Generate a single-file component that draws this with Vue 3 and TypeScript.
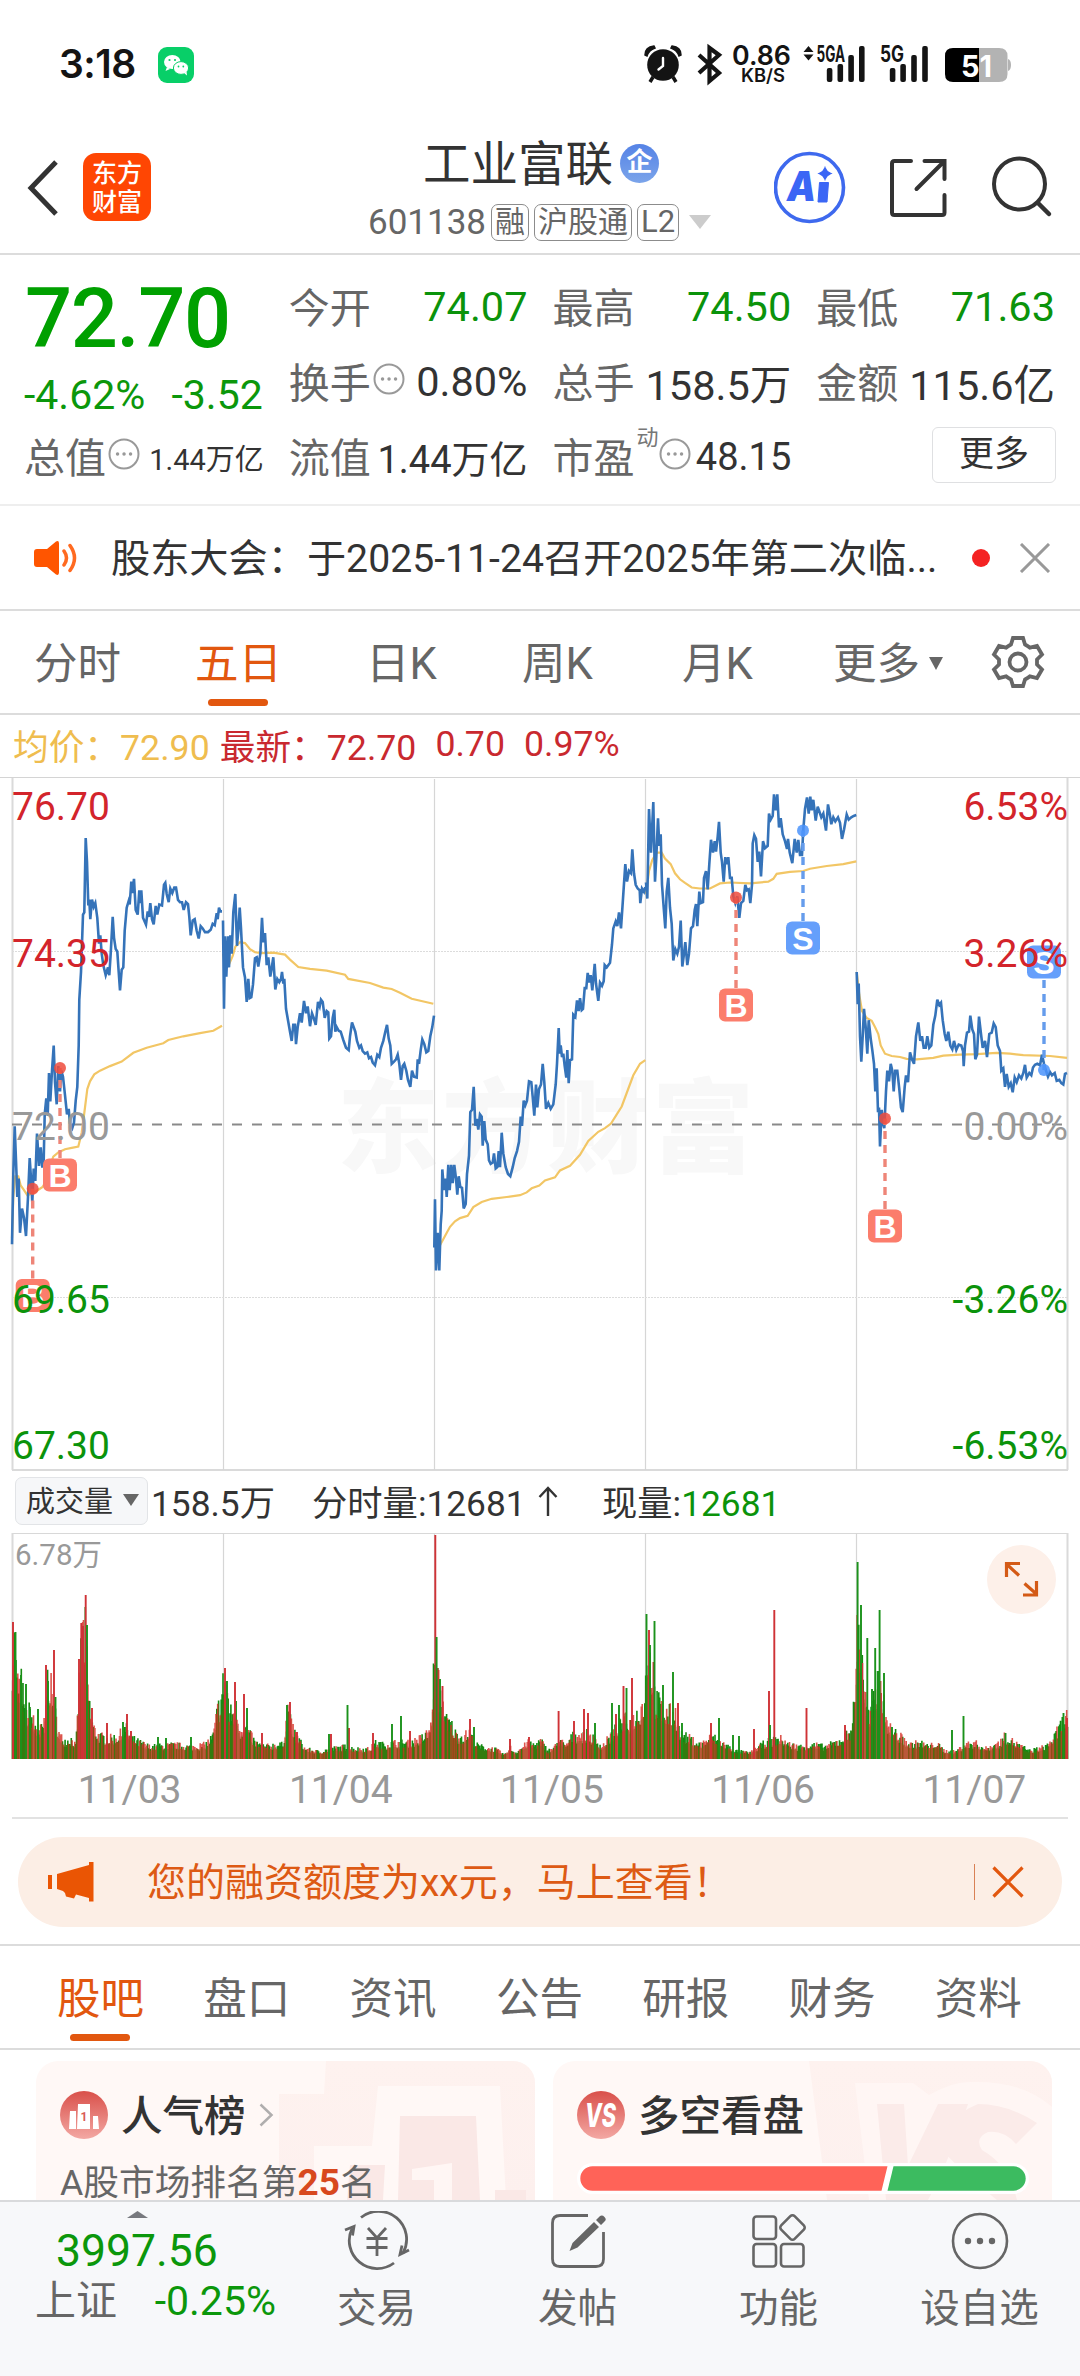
<script setup lang="ts">
type Pt = [number, number]

interface Day {
  base: number
  price: string
  avg: string
}

// Traces are recorded on a 3 x 2.178 grid relative to the top of the plot.
const days: Day[] = [
  {
    base: 0,
    price:
      '36,1033 40,880 44,776 48,850 52,930 56,890 60,1008 66,955 72,975 78,1015 84,930 89,845 93,890 97,942 101,868 106,895 111,792 117,862 122,822 127,866 131,850 134,750 139,715 143,753 147,660 151,722 156,655 161,600 165,680 170,728 175,645 180,700 184,655 189,668 195,708 201,750 206,738 210,770 217,780 222,768 227,720 232,690 236,600 238,500 243,440 249,315 253,310 257,148 261,200 265,295 268,282 271,325 276,282 281,298 286,290 292,322 297,378 301,360 305,400 310,425 317,447 324,430 328,447 332,400 338,320 342,365 347,390 352,395 356,440 360,480 365,435 370,430 374,350 380,300 386,285 389,293 394,243 397,268 402,237 407,305 413,315 418,262 421,290 424,262 429,322 438,337 443,308 447,320 451,290 456,325 461,336 467,296 472,315 478,293 486,295 492,250 496,246 500,270 506,288 511,258 517,268 523,256 528,256 534,283 540,288 546,288 551,305 558,288 564,292 568,320 572,360 578,328 584,325 590,350 596,367 602,340 608,345 615,353 624,353 632,348 638,335 644,338 650,312 653,325 657,300 661,308 666,308',
    avg: '36,1020 40,930 46,885 55,885 62,905 72,915 82,926 98,922 115,914 128,908 140,893 150,862 160,842 175,833 195,826 215,823 235,820 245,790 255,735 262,695 270,678 283,663 300,655 330,645 365,635 400,616 440,605 490,595 505,588 550,580 600,573 640,568 666,557',
  },
  {
    base: 0,
    price:
      '669,328 672,520 675,362 679,450 684,362 687,430 691,360 695,400 700,310 706,270 711,383 715,350 719,300 723,345 729,430 735,452 740,505 745,455 749,497 754,495 759,467 765,410 770,408 775,428 781,400 786,322 790,375 795,355 800,425 805,408 811,450 815,432 820,408 826,478 832,455 838,462 843,455 846,440 850,465 853,455 858,520 864,545 870,570 875,590 880,555 885,555 888,597 893,560 900,530 905,550 912,503 918,530 923,515 930,558 936,530 941,540 947,555 954,505 959,515 963,500 968,505 974,540 980,525 985,528 988,585 993,580 998,540 1003,522 1006,570 1010,560 1016,568 1022,570 1030,588 1038,605 1046,610 1050,580 1056,550 1061,560 1066,570 1071,590 1078,605 1083,600 1088,612 1095,618 1102,615 1107,628 1113,625 1118,637 1125,643 1132,620 1138,625 1143,605 1150,590 1156,570 1161,555 1166,585 1171,600 1175,640 1182,635 1188,630 1193,620 1198,640 1203,675 1208,645 1213,640 1219,655 1224,675 1231,690 1236,655 1242,668 1250,670 1253,630 1257,640 1262,610 1267,587 1273,597 1279,615 1285,612 1291,580 1297,560 1302,535',
    avg: '669,400 678,430 686,425 698,405 706,385 720,375 735,377 750,390 765,397 785,399 820,398 855,402 870,413 895,429 930,433 980,437 1035,446 1045,455 1110,464 1150,474 1175,477 1200,485 1235,498 1300,509',
  },
  {
    base: 1260,
    price:
      '43,1040 45,935 48,1090 53,1008 58,1090 62,990 65,960 67,870 72,915 77,890 80,930 85,860 89,915 94,860 98,900 103,860 108,890 112,925 116,885 121,908 126,910 131,955 137,945 141,880 147,840 151,745 156,740 161,690 166,775 170,760 175,783 180,750 185,755 188,818 193,765 197,805 203,815 207,850 212,858 218,855 222,835 227,868 232,865 236,830 240,865 245,790 250,835 257,865 264,880 271,885 278,865 284,845 291,830 297,810 302,755 306,775 311,720 316,730 321,720 327,678 334,680 338,712 343,753 348,685 352,735 357,695 363,685 368,640 373,680 378,738 385,725 392,738 400,728 407,685 411,640 416,562 419,618 422,600 426,625 430,618 434,645 439,670 442,610 446,682 450,632 456,630 460,533 466,538 471,502 476,525 480,497 485,523 489,520 494,475 499,475 503,442 508,463 512,447 517,480 524,422 528,465 535,503 540,463 546,470 551,460 554,425 560,430 570,420 576,380 580,345 587,330 592,340 597,310 603,345 609,280 616,205 621,243 627,220 633,225 637,173 642,225 647,250 653,258 659,262 661,290 666,258 672,265 676,255',
    avg: '60,1035 75,1015 90,995 105,983 120,976 143,971 160,952 185,941 215,934 260,930 300,926 320,920 335,911 358,905 375,894 405,887 420,872 450,862 480,838 505,808 535,788 555,780 573,770 605,733 640,665 660,640 676,632',
  },
  {
    base: 1260,
    price:
      '678,245 682,280 687,85 693,180 700,70 705,243 709,190 714,105 718,165 722,140 726,250 731,300 736,345 740,265 745,235 750,300 755,335 760,415 766,390 772,400 777,385 782,328 787,428 791,405 796,375 802,425 807,400 813,345 819,340 824,305 828,292 832,340 838,265 842,290 849,288 852,235 858,220 863,260 868,205 873,152 879,180 884,155 888,178 893,145 897,113 902,180 906,200 911,243 916,190 920,205 925,190 930,235 935,235 940,275 946,290 952,275 958,322 963,290 970,285 976,250 981,262 986,260 991,290 996,250 998,160 1003,142 1008,150 1013,200 1018,178 1023,232 1029,155 1035,170 1043,165 1047,95 1052,108 1058,100 1062,53 1067,88 1072,53 1077,125 1082,105 1088,140 1095,155 1101,172 1104,150 1109,180 1117,203 1124,150 1130,180 1135,152 1140,185 1146,185 1150,130 1155,85 1161,60 1166,95 1171,58 1175,88 1180,65 1187,110 1193,80 1198,90 1204,103 1210,95 1218,132 1224,75 1229,95 1234,118 1240,103 1246,112 1254,103 1260,115 1266,150 1272,130 1280,97 1286,108 1294,103 1301,100 1309,98',
    avg: '678,270 687,220 697,196 710,180 725,180 735,193 752,205 765,225 780,238 795,246 815,256 840,258 870,258 900,247 930,245 990,247 1045,243 1060,237 1070,226 1110,222 1150,220 1170,215 1220,209 1270,205 1309,199',
  },
  {
    base: 2460,
    price:
      '110,440 113,510 116,465 120,580 124,635 128,580 132,520 137,560 142,618 146,545 152,585 157,610 162,640 166,700 170,650 174,745 177,735 180,820 185,740 189,770 193,780 198,700 202,655 207,678 212,640 217,655 221,700 226,655 232,655 238,695 243,735 248,745 254,690 258,665 264,680 270,615 276,630 282,640 288,580 295,550 301,590 306,580 311,605 317,605 322,580 328,605 334,600 340,555 346,535 352,500 358,512 363,507 368,545 374,575 379,590 385,570 391,600 397,608 402,590 409,610 416,598 424,600 429,612 431,645 435,600 441,572 447,570 451,535 457,565 462,575 466,630 471,620 477,537 483,575 488,605 495,590 501,625 508,575 515,572 521,552 527,560 533,600 540,612 544,655 550,650 555,690 560,662 566,690 572,682 578,702 584,670 590,680 597,665 604,672 610,660 615,642 620,670 628,660 634,665 639,648 645,642 652,640 660,643 666,620 672,640 678,655 684,668 690,658 696,665 704,660 710,677 718,675 724,682 730,685 735,662 741,660',
    avg: '110,440 118,490 126,525 140,540 155,546 165,560 175,575 182,600 195,618 215,623 240,625 260,629 290,630 340,627 370,622 420,620 470,619 530,616 570,618 610,621 690,623 741,627',
  },
]

const project = (raw: string, base: number): string =>
  raw
    .split(' ')
    .map((p) => {
      const [x, y] = p.split(',').map(Number)
      return `${((x + base) / 3).toFixed(1)},${(y / 2.178 - 7).toFixed(1)}`
    })
    .join(' ')

const priceLines = days.map((d) => project(d.price, d.base))
const avgLines = days.map((d) => project(d.avg, d.base))

const separators = [223.5, 434.5, 645.5, 856.5]

const axis = [
  { y: 43, left: '76.70', right: '6.53%', color: '#d3242b' },
  { y: 190, left: '74.35', right: '3.26%', color: '#d3242b' },
  { y: 363, left: '72.00', right: '0.00%', color: '#999' },
  { y: 536, left: '69.65', right: '-3.26%', color: '#0b930b' },
  { y: 682, left: '67.30', right: '-6.53%', color: '#0b930b' },
]

interface Marker {
  kind: 'B' | 'S'
  x: number
  dot: number
  box: number
}
const markers: Marker[] = [
  { kind: 'B', x: 32.7, dot: 411.7, box: 518.5 },
  { kind: 'B', x: 60, dot: 291, box: 398 },
  { kind: 'B', x: 736, dot: 120.6, box: 228 },
  { kind: 'S', x: 803, dot: 53.6, box: 161 },
  { kind: 'B', x: 885, dot: 341.5, box: 449 },
  { kind: 'S', x: 1044, dot: 293, box: 185 },
]

// Volume envelope, minute bars are drawn underneath it.
const envelope: Pt[] = [
  [12, 100], [14, 120], [17, 75], [22, 75], [25, 40], [30, 48], [35, 32], [40, 28], [45, 35], [47, 80], [50, 76], [54, 50], [57, 35], [60, 22], [66, 18], [72, 20], [76, 12], [80, 90], [83, 130], [86, 120], [88, 70], [91, 38], [95, 28], [100, 22], [110, 20], [118, 22], [126, 30], [132, 20], [140, 16], [150, 12], [165, 13], [175, 14], [190, 12], [205, 14], [213, 22], [218, 50], [222, 62],
  [224, 85], [227, 75], [229, 45], [233, 45], [236, 50], [240, 28], [244, 34], [248, 28], [255, 16], [265, 12], [275, 14], [283, 14], [288, 50], [292, 30], [297, 22], [305, 10], [320, 7], [330, 10], [345, 12], [355, 10], [370, 10], [376, 16], [383, 14], [395, 16], [405, 16], [415, 18], [425, 22], [431, 32], [434, 90],
  [437, 90], [440, 60], [444, 54], [446, 38], [450, 36], [456, 24], [463, 22], [470, 26], [476, 14], [485, 11], [495, 10], [505, 4], [510, 12], [515, 6], [520, 10], [528, 16], [535, 14], [541, 18], [548, 8], [555, 12], [560, 20], [565, 12], [572, 22], [580, 24], [588, 24], [596, 18], [602, 12], [610, 22], [618, 32], [625, 38], [632, 36], [640, 50], [645, 58],
  [647, 110], [650, 100], [655, 60], [662, 50], [668, 45], [676, 45], [680, 24], [690, 20], [700, 14], [712, 22], [722, 16], [735, 8], [750, 6], [765, 16], [780, 20], [790, 14], [800, 12], [815, 14], [825, 12], [840, 18], [850, 28], [855, 55],
  [857, 130], [862, 105], [866, 55], [870, 40], [875, 60], [880, 75], [885, 48], [890, 30], [900, 22], [910, 14], [920, 16], [930, 12], [935, 16], [945, 8], [955, 7], [965, 14], [975, 16], [985, 10], [1000, 16], [1005, 22], [1018, 14], [1030, 8], [1045, 12], [1055, 22], [1060, 32], [1068, 44],
]

const spikes: [number, number, 'r' | 'g'][] = [
  [13, 137, 'r'], [15.5, 127, 'g'], [21, 84, 'g'], [26, 75, 'g'], [30, 50, 'g'], [38, 50, 'g'], [46, 94, 'r'], [48, 78, 'g'], [54, 109, 'r'], [55.5, 62, 'g'], [79, 100, 'r'], [81.3, 136, 'r'], [83, 133, 'r'], [85.7, 164, 'r'], [87, 134, 'g'], [92, 51, 'r'], [107, 36, 'r'], [123, 37, 'g'], [127, 45, 'r'], [131, 28, 'r'], [158, 22, 'g'], [166, 21, 'g'], [191, 22, 'g'],
  [225, 91, 'r'], [227, 78, 'g'], [235, 77, 'r'], [244, 65, 'r'], [247, 51, 'g'], [262, 26, 'r'], [287, 54, 'g'], [290, 57, 'r'], [297, 27, 'r'], [329, 25, 'g'], [331, 25, 'r'], [347.5, 54, 'g'], [349, 31, 'r'], [373, 26, 'r'], [392, 35, 'g'], [401, 43, 'g'], [410, 28, 'r'],
  [435.3, 224, 'r'], [436.6, 122, 'g'], [437.5, 91, 'r'], [440, 80, 'g'], [442.5, 73, 'r'], [470, 40, 'r'], [474, 32, 'g'], [510, 20, 'r'], [529, 22, 'r'], [558.6, 48, 'r'], [574, 38, 'r'], [584, 50, 'r'], [588, 46, 'r'], [595, 36, 'g'], [612, 56, 'g'], [616, 45, 'r'], [619, 54, 'g'], [623.5, 73, 'r'], [626.5, 71, 'g'], [632, 81, 'r'],
  [646.5, 145, 'g'], [649, 129, 'r'], [650, 114, 'g'], [654.5, 138, 'g'], [653.5, 97, 'r'], [663, 74, 'g'], [673, 87, 'g'], [678, 56, 'r'], [682, 36, 'g'], [711, 36, 'r'], [719, 41, 'g'], [733, 24, 'g'], [739, 23, 'g'], [754, 30, 'r'], [769, 68, 'r'], [770, 34, 'g'], [774.3, 149, 'r'], [806.5, 51, 'r'], [845, 34, 'r'],
  [857.6, 197, 'g'], [861, 154, 'g'], [862.3, 96, 'r'], [867.3, 121, 'g'], [872, 70, 'g'], [875.2, 111, 'g'], [877.7, 88, 'g'], [879.6, 149, 'g'], [881, 66, 'r'], [884, 86, 'g'], [892, 32, 'g'], [952, 29, 'g'], [963.5, 43, 'g'], [1005.5, 26, 'g'], [1063.5, 46, 'g'], [1067, 41, 'r'],
]

let seed = 7
const random = (): number => {
  seed = (seed * 16807) % 2147483647
  return seed / 2147483647
}

const heightAt = (x: number): number => {
  for (let i = 1; i < envelope.length; i++) {
    const [x1, h1] = envelope[i]
    if (x <= x1) {
      const [x0, h0] = envelope[i - 1]
      return h0 + ((h1 - h0) * (x - x0)) / (x1 - x0)
    }
  }
  return envelope[envelope.length - 1][1]
}

const bars = { r: '', g: '', olive: '' }
for (let x = 12.5; x < 1068; x += 0.877) {
  const full = heightAt(x)
  const h = full * (0.65 + random() * 0.6)
  const key = random() < 0.5 ? 'r' : 'g'
  bars[key] += `M${x.toFixed(1)} 226v${(-h).toFixed(1)}`
  bars.olive += `M${x.toFixed(1)} 226v${(-full * 0.75).toFixed(1)}`
}
const spikePaths = { r: '', g: '' }
spikes.forEach(([x, h, c]) => {
  spikePaths[c] += `M${x} 226v${-h}`
})

const periods = ['分时', '五日', '日K', '周K', '月K']
const dates = ['11/03', '11/04', '11/05', '11/06', '11/07']
const sections = ['股吧', '盘口', '资讯', '公告', '研报', '财务', '资料']
</script>

<template>
  <div class="app" lang="zh-CN">
    <div class="status">
      <span class="clock">3:18</span>
      <svg class="wechat" width="36" height="36" viewBox="0 0 36 36">
        <rect width="36" height="36" rx="9" fill="#08cf68" />
        <ellipse cx="14.3" cy="15" rx="8.3" ry="7" fill="#fff" />
        <path d="M9 20l-1.5 4 4.5-2z" fill="#fff" />
        <ellipse cx="23" cy="21" rx="7.6" ry="6.4" fill="#fff" stroke="#08cf68" stroke-width="1" />
        <path d="M26 26l3 2.6-.5-4z" fill="#fff" />
        <g fill="#08cf68"><circle cx="11.5" cy="13" r="1.1" /><circle cx="17" cy="13" r="1.1" /><circle cx="20.5" cy="19.5" r=".9" /><circle cx="25.3" cy="19.5" r=".9" /></g>
      </svg>
      <svg class="sys" width="370" height="48" viewBox="644 38 370 48">
        <g fill="#141414">
          <circle cx="663" cy="65" r="15.8" />
          <path d="M645 55q0-8 9-9l1 2q-6 2-8 8zM681 55q0-8-9-9l-1 2q6 2 8 8z" stroke="#141414" stroke-width="1.5" />
          <path d="M653 77l-3 5M673 77l3 5" stroke="#141414" stroke-width="3.5" />
          <path d="M663 58v8l-4.500 3.500" fill="none" stroke="#fff" stroke-width="2.4" stroke-linecap="round" />
        </g>
        <path d="M699 55l20 18-9.500 8V48l9.500 7-20 18" fill="none" stroke="#141414" stroke-width="4.2" />
        <g font-family="Inter, Roboto, sans-serif" font-weight="700" fill="#141414">
          <text x="732" y="65" font-size="26.500" textLength="59" lengthAdjust="spacingAndGlyphs" font-weight="600">0.86</text>
          <text x="741" y="81.500" font-size="18" textLength="44" lengthAdjust="spacingAndGlyphs" font-weight="600">KB/S</text>
          <text x="816.500" y="61.500" font-size="22.500" textLength="28.500" lengthAdjust="spacingAndGlyphs">5GA</text>
          <text x="880" y="61.500" font-size="22.500" textLength="24" lengthAdjust="spacingAndGlyphs">5G</text>
        </g>
        <path d="M803.5 52l5-6 5 6zM803.500 54.500l5 6 5-6z" fill="#141414" />
        <g fill="#141414">
          <rect x="826.800" y="68" width="5.600" height="14" rx="2" /><rect x="837.500" y="64" width="5.600" height="18" rx="2" /><rect x="848.300" y="55" width="5.600" height="27" rx="2" /><rect x="859" y="46" width="5.600" height="36" rx="2" />
          <rect x="889.800" y="68" width="5.600" height="14" rx="2" /><rect x="900.300" y="64" width="5.600" height="18" rx="2" /><rect x="911.200" y="55" width="5.600" height="27" rx="2" /><rect x="922.200" y="46" width="5.600" height="36" rx="2" />
        </g>
        <path d="M979 48h20q8.500 0 8.500 8v18q0 8-8.500 8h-20z" fill="#b3b3b3" />
        <path d="M979 48h-26q-8 0-8 8v18q0 8 8 8h26z" fill="#000" />
        <path d="M1008 59q3 1 3 6t-3 6z" fill="#b3b3b3" />
        <text x="961" y="76.500" font-family="Inter, Roboto, sans-serif" font-weight="700" font-size="30" fill="#fff" textLength="31" lengthAdjust="spacingAndGlyphs">51</text>
      </svg>
    </div>

    <header class="header">
      <svg class="back" width="34" height="58" viewBox="0 0 34 58"><path d="M30 3L5 29l25 26" fill="none" stroke="#333" stroke-width="5" /></svg>
      <div class="logo"><span>东方</span><span>财富</span></div>
      <div class="stock">
        <div class="name">工业富联<i>企</i></div>
        <div class="code">
          601138<b>融</b><b>沪股通</b><b class="l2">L2</b>
          <svg width="22" height="14" viewBox="0 0 22 14"><path d="M0 0h22L11 14z" fill="#ccc" /></svg>
        </div>
      </div>
      <svg class="ai" width="74" height="74" viewBox="0 0 74 74">
        <circle cx="35.500" cy="37.500" r="34" fill="none" stroke="#3e69ee" stroke-width="3.600" />
        <text x="13" y="51" font-family="Inter, sans-serif" font-weight="900" font-style="italic" font-size="41" fill="#3b66f5" textLength="29" lengthAdjust="spacingAndGlyphs">A</text>
        <path d="M45.500 32.500h9L53 52h-9z" fill="#3b66f5" stroke="#3b66f5" stroke-linejoin="round" />
        <path d="M51 18q1.500 4 5.500 5.500Q52.500 25 51 29 49.500 25 45.500 23.500 49.500 22 51 18z" fill="#3b66f5" stroke="#3b66f5" stroke-width="1.500" />
      </svg>
      <svg class="share" width="62" height="62" viewBox="0 0 62 62"><path d="M23 4H6.500Q4 4 4 6.500v49Q4 58 6.500 58H54q2.500 0 2.500-2.500V38M36.500 4h20v18M56 4.500L28.500 32" fill="none" stroke="#333" stroke-width="4" stroke-linecap="round" /></svg>
      <svg class="search" width="62" height="62" viewBox="0 0 62 62"><circle cx="27.500" cy="28" r="25.500" fill="none" stroke="#333" stroke-width="4" /><path d="M46 47l11 11" stroke="#333" stroke-width="4.500" stroke-linecap="round" /></svg>
    </header>

    <section class="quote">
      <div class="col first">
        <div class="last">72.70</div>
        <div class="row change"><span>-4.62%</span><span>-3.52</span></div>
        <div class="row">
          <label>总值</label><svg class="info" viewBox="0 0 32 32"><circle cx="16" cy="16" r="14.500" /><path d="M9.500 16h.1M16 16h.1M22.500 16h.1" /></svg>
          <em class="tiny">1.44万亿</em>
        </div>
      </div>
      <div class="col">
        <div class="row"><label>今开</label><em class="down">74.07</em></div>
        <div class="row">
          <label>换手</label><svg class="info" viewBox="0 0 32 32"><circle cx="16" cy="16" r="14.500" /><path d="M9.500 16h.1M16 16h.1M22.500 16h.1" /></svg>
          <em>0.80%</em>
        </div>
        <div class="row"><label>流值</label><em class="mid">1.44万亿</em></div>
      </div>
      <div class="col">
        <div class="row"><label>最高</label><em class="down">74.50</em></div>
        <div class="row"><label>总手</label><em>158.5万</em></div>
        <div class="row">
          <label>市盈</label><sup>动</sup><svg class="info" viewBox="0 0 32 32"><circle cx="16" cy="16" r="14.500" /><path d="M9.500 16h.1M16 16h.1M22.500 16h.1" /></svg>
          <em class="mid">48.15</em>
        </div>
      </div>
      <div class="col">
        <div class="row"><label>最低</label><em class="down">71.63</em></div>
        <div class="row"><label>金额</label><em>115.6亿</em></div>
        <div class="row"><button class="more">更多</button></div>
      </div>
    </section>

    <section class="notice">
      <svg width="46" height="36" viewBox="0 0 46 36">
        <path d="M3 9h10L22 1.500q3-1.500 3 2v29q0 3.500-3 2L13 27H3q-3 0-3-3V12q0-3 3-3z" fill="#ff5500" />
        <path d="M30 11q5 7 0 14M36 5.500q9 12.500 0 25" fill="none" stroke="#ff6a20" stroke-width="3.500" stroke-linecap="round" />
      </svg>
      <p>股东大会：于2025-11-24召开2025年第二次临...</p>
      <i class="dot"></i>
      <svg width="32" height="30" viewBox="0 0 32 30"><path d="M2 1l28 28M30 1L2 29" stroke="#999" stroke-width="3" /></svg>
    </section>

    <nav class="periods">
      <span v-for="(p, i) in periods" :key="p" :class="['p' + i, { on: i === 1 }]">{{ p }}</span>
      <span class="p5">更多<svg width="14" height="13" viewBox="0 0 14 13"><path d="M0 0h14L7 13z" fill="#666" /></svg></span>
      <svg class="gear" width="54" height="54" viewBox="-27 -27 54 54" fill="none" stroke="#666" stroke-width="3.800">
        <path d="M-5-24H5L7-17.500Q10-16 12-14.300L19-16 24-7.500 19-2.500V2.500L24 7.500 19 16 12 14.300Q10 16 7 17.500L5 24H-5L-7 17.500Q-10 16-12 14.300L-19 16-24 7.500-19 2.500V-2.500L-24-7.500-19-16-12-14.300Q-10-16-7-17.500Z" />
        <circle r="8.500" />
      </svg>
    </nav>

    <div class="legend">
      <span class="avg">均价：72.90</span><span>最新：72.70</span><span>0.70</span><span>0.97%</span>
    </div>

    <svg class="chart" width="1080" height="694" viewBox="0 0 1080 694">
      <text x="547" y="388" text-anchor="middle" font-size="102" font-weight="900" letter-spacing="3" fill="#f8f8f8">东方财富</text>
      <path d="M0 .5H1080" stroke="#d4d4d4" />
      <path d="M12.500 1V693M1067.500 1V693M12 693H1068" stroke="#dadada" stroke-width="2" fill="none" />
      <path v-for="x in separators" :key="x" :d="`M${x} 2V693`" stroke="#d6d6d6" stroke-width="1.200" />
      <path d="M12 174.500H1068M12 520.500H1068" stroke="#dcdcdc" stroke-dasharray="2 1" />
      <path d="M12 347.500H1068" stroke="#8a8a8a" stroke-width="1.800" stroke-dasharray="10 10" />
      <polyline v-for="(l, i) in avgLines" :key="'a' + i" :points="l" fill="none" stroke="#f2c665" stroke-width="2.200" />
      <polyline v-for="(l, i) in priceLines" :key="'p' + i" :points="l" fill="none" stroke="#3573b9" stroke-width="2.600" />
      <g v-for="(m, i) in markers" :key="'m' + i" :class="m.kind === 'B' ? 'buy' : 'sell'">
        <path :d="m.box > m.dot ? `M${m.x} ${m.box - 17}V${m.dot}` : `M${m.x} ${m.box + 18}V${m.dot}`" stroke-width="3.400" stroke-dasharray="8 6" />
        <circle :cx="m.x" :cy="m.dot" r="6" />
        <rect :x="m.x - 17" :y="m.box - 16.500" width="34" height="33" rx="6" />
        <text :x="m.x" :y="m.box + 11.500" text-anchor="middle">{{ m.kind }}</text>
      </g>
      <g font-size="39">
        <template v-for="a in axis" :key="a.y">
          <text x="12" :y="a.y" :fill="a.color">{{ a.left }}</text>
          <text x="1068" :y="a.y" :fill="a.color" text-anchor="end">{{ a.right }}</text>
        </template>
      </g>
    </svg>

    <div class="volbar">
      <button>成交量<svg width="16" height="12" viewBox="0 0 16 12"><path d="M0 0h16L8 12z" fill="#666" /></svg></button>
      <span class="v0">158.5万</span>
      <span class="v1">分时量:12681<svg width="20" height="30" viewBox="0 0 20 30"><path d="M10 30V2M1.500 11L10 2l8.500 9" fill="none" stroke="#333" stroke-width="2.400" /></svg></span>
      <span class="v2">现量:<em>12681</em></span>
    </div>

    <div class="volume">
      <svg width="1080" height="226" viewBox="0 0 1080 226">
        <path d="M12 .5H1068" stroke="#d8d8d8" />
        <path d="M12.500 0V226M1067.500 0V226" stroke="#dadada" stroke-width="2" />
        <path v-for="x in separators" :key="x" :d="`M${x} 0V226`" stroke="#d6d6d6" stroke-width="1.200" />
        <text x="15" y="32" font-size="29.500" fill="#999">6.78万</text>
        <g stroke-width="1.600" fill="none">
          <path :d="bars.g" stroke="#158a10" />
          <path :d="bars.r" stroke="#d32a20" stroke-opacity=".8" />
          <path :d="bars.olive" stroke="#74600f" stroke-opacity=".32" />
          <path :d="spikePaths.r" stroke="#cf3236" stroke-width="1.900" />
          <path :d="spikePaths.g" stroke="#1b921b" stroke-width="1.900" />
        </g>
        <circle cx="1021.500" cy="46.500" r="34.500" fill="#fdf0e9" />
        <path d="M1019 42.500L1006.500 31M1006.500 44V30.500H1020M1024.500 50.500L1037 61.500M1036.500 48V62H1023" fill="none" stroke="#d45a16" stroke-width="3.200" />
      </svg>
    </div>
    <div class="dates"><span v-for="d in dates" :key="d">{{ d }}</span></div>

    <div class="banner">
      <svg width="46" height="40" viewBox="0 0 46 40" fill="#ea5504"><path d="M0 13h4v14H0zM9 12L41 3V0h4.500v39.500H41V36l-13-3.500-2 4-8-2-1-3.500-2-2-6-2z" /></svg>
      <p>您的融资额度为xx元，马上查看！</p>
      <i></i>
      <svg width="32" height="32" viewBox="0 0 32 32"><path d="M1.500 1.500l29 29M30.500 1.500l-29 29" stroke="#e2570f" stroke-width="3.200" /></svg>
    </div>

    <nav class="sections">
      <span v-for="(s, i) in sections" :key="s" :class="{ on: i === 0 }">{{ s }}</span>
    </nav>

    <div class="cards">
      <div class="card">
        <svg class="art" width="499" height="139" viewBox="0 0 499 139">
          <defs>
            <linearGradient id="disc" x1="0" y1="0" x2="0" y2="1"><stop offset="0" stop-color="#d9504a" /><stop offset="1" stop-color="#f3a8a3" /></linearGradient>
            <linearGradient id="wash" x1="0" y1="0" x2="0" y2="1"><stop offset="0" stop-color="#fef2ef" /><stop offset="1" stop-color="#fdf0ee" /></linearGradient>
          </defs>
          <path d="M290 0H499V139H243V33h45z" fill="url(#wash)" />
          <path d="M342 25H464L470 139H278V85h58z" fill="#fff8f6" />
          <path d="M364 55H440L444 139H362zM314 104h35l-2 35H311zM459 129h31v10h-31z" fill="#fae8e6" />
          <path d="M376 108l40-6v37h-18v-20h-22z" fill="#fff6f4" />
        </svg>
        <div class="head">
          <svg width="48" height="48" viewBox="0 0 48 48">
            <circle cx="24" cy="24" r="24" fill="url(#disc)" />
            <path d="M10 20h6v18H9zM18 13h12v25H17zM33 25h5l1 13h-6z" fill="#fff" />
            <text x="20.500" y="30" font-size="12" font-weight="700" fill="#da5a55">1</text>
          </svg>
          <h3>人气榜</h3>
          <svg width="15" height="24" viewBox="0 0 15 24"><path d="M1.500 1.500L12.500 12 1.500 22.500" fill="none" stroke="#b0aeae" stroke-width="2.500" /></svg>
        </div>
        <p>A股市场排名第<b>25</b>名</p>
      </div>
      <div class="card">
        <svg class="art" width="499" height="139" viewBox="0 0 499 139">
          <path d="M256 0H499V139H274z" fill="url(#wash)" />
          <path d="M302 22H360L376 34Q400 20 420 21 470 20 499 46V139H316z" fill="#fff6f4" />
          <path d="M324 43h27l4 62 30-62h30q-20 60-40 96h-42z" fill="#fbebe9" />
          <path d="M484 62Q455 43 425 43 385 60 390 90q20 22 54 49h20q-8-35-35-50-8-12 6-18 16-2 28 12z" fill="#fbebe9" />
        </svg>
        <div class="head">
          <svg width="48" height="48" viewBox="0 0 48 48">
            <circle cx="24" cy="24" r="24" fill="url(#disc)" />
            <text x="8" y="36" font-family="Inter, sans-serif" font-size="33" font-weight="800" font-style="italic" fill="#fff" textLength="31" lengthAdjust="spacingAndGlyphs">VS</text>
          </svg>
          <h3>多空看盘</h3>
        </div>
        <svg class="ratio" width="452" height="31" viewBox="0 0 452 31">
          <rect width="452" height="31" rx="15.500" fill="#fff" />
          <path d="M15.500 3.300H310.500L304.500 27.700H15.500a12.200 12.200 0 0 1 0-24.400z" fill="#ff6358" />
          <path d="M316.500 3.300H436.500a12.200 12.200 0 0 1 0 24.400H310.500z" fill="#3cbb60" />
        </svg>
      </div>
    </div>

    <footer class="dock">
      <div class="index">
        <svg width="21" height="7" viewBox="0 0 21 7"><path d="M0 7L10.500 0 21 7z" fill="#77797e" /></svg>
        <strong>3997.56</strong>
        <div><span>上证</span><em>-0.25%</em></div>
      </div>
      <div class="item">
        <svg width="68" height="60" viewBox="-34 -30 68 60" fill="none" stroke="#666" stroke-width="2.800">
          <path d="M-16-23.500A28 28 0 0 1 26 12M17 22A28 28 0 0 1-25-12.500" /><path d="M-32-10l9-3.500-1.500 9M32 10l-9 4.500 2-9" transform="translate(0 -1)" />
          <path d="M-9-13L0-3 9-13M0-3V15M-10.500-2.500h21M-10.500 6.500h21" />
        </svg>
        <span>交易</span>
      </div>
      <div class="item">
        <svg width="60" height="60" viewBox="0 0 60 60" fill="none" stroke="#666" stroke-width="2.800">
          <path d="M40 4.500H12Q4.500 4.500 4.500 12v36q0 7.500 7.500 7.500h36q7.500 0 7.500-7.500V21" />
          <path d="M21.500 40l3-8L46 11l5 5-21.500 20.500zM48 9l3.500-3.500q2.500-2 5 .5t0 4.500L53 14z" fill="#666" stroke="none" />
        </svg>
        <span>发帖</span>
      </div>
      <div class="item">
        <svg width="60" height="60" viewBox="0 0 60 60" fill="none" stroke="#666" stroke-width="2.600">
          <rect x="4.500" y="5.500" width="22.500" height="22.500" rx="3" /><rect x="4.500" y="33" width="22.500" height="22.500" rx="3" /><rect x="32" y="33" width="22.500" height="22.500" rx="3" />
          <rect x="34" y="7" width="19" height="19" rx="3" transform="rotate(45 43.500 16.500)" />
        </svg>
        <span>功能</span>
      </div>
      <div class="item">
        <svg width="60" height="60" viewBox="0 0 60 60" fill="none" stroke="#666" stroke-width="2.600">
          <circle cx="30" cy="30" r="27" /><g fill="#666" stroke="none"><circle cx="18" cy="30" r="3.200" /><circle cx="30" cy="30" r="3.200" /><circle cx="42" cy="30" r="3.200" /></g>
        </svg>
        <span>设自选</span>
      </div>
    </footer>
  </div>
</template>

<style>
body {
  background: #fff;
}
</style>

<style scoped>
.app {
  width: 1080px;
  height: 2376px;
  overflow: hidden;
  background: #fff;
  font-family: Roboto, 'Noto Sans CJK SC', sans-serif;
  color: #333;
  display: flex;
  flex-direction: column;
}
.app * {
  box-sizing: border-box;
}
.app > * {
  flex: none;
}
svg {
  display: block;
  flex: none;
}
em,
i {
  font-style: normal;
}
p,
h3 {
  margin: 0;
}
button {
  font: inherit;
  color: inherit;
  padding: 0;
  background: none;
}
.status {
  height: 120px;
  padding: 38px 66px 0 59px;
  display: flex;
}
.clock {
  font: 600 39px/52px Inter, sans-serif;
  width: 99px;
  letter-spacing: -0.5px;
  color: #141414;
}
.wechat {
  margin-top: 9px;
}
.sys {
  margin-left: auto;
}

.header {
  height: 135px;
  border-bottom: 2px solid #dcdcdc;
  display: flex;
}
.back {
  margin: 39px 0 0 26px;
}
.logo {
  margin: 33px 0 0 23px;
  width: 68px;
  height: 68px;
  border-radius: 13px;
  background: #ff4603;
  color: #fff;
  font: 500 25px/29px 'Noto Sans CJK SC', sans-serif;
  display: flex;
  flex-direction: column;
  align-items: center;
  padding-top: 4px;
}
.stock {
  width: 360px;
  margin-left: 217px;
}
.name {
  margin: 14px 0 0 55px;
  font-size: 47.500px;
  line-height: 62px;
  height: 62px;
  display: flex;
}
.name i {
  width: 39px;
  height: 39px;
  margin: 10px 0 0 7px;
  border-radius: 50%;
  background: linear-gradient(#5583e6, #7ba4ea);
  color: #fff;
  font-size: 26px;
  font-weight: 700;
  line-height: 37px;
  text-align: center;
}
.code {
  display: flex;
  align-items: center;
  height: 38px;
  margin-top: 7px;
  font-size: 35px;
  color: #666;
}
.code b {
  font-weight: 400;
  font-size: 30px;
  line-height: 33px;
  height: 37px;
  padding: 0 3px;
  border: 1.500px solid #8c8c8c;
  border-radius: 7px;
  margin-left: 5px;
}
.code b.l2 {
  padding: 0 3px;
  font-size: 31px;
}
.code svg {
  margin-left: 10px;
}
.ai {
  margin: 30px 0 0 46px;
}
.share {
  margin: 37px 0 0 40px;
}
.search {
  margin: 36px 0 0 42px;
}

.quote {
  height: 251px;
  border-bottom: 2px solid #eee;
  display: flex;
  padding: 14px 25px 0;
  gap: 26px;
}
.col {
  width: 238px;
}
.col.first {
  width: 239px;
}
.row {
  height: 75px;
  display: flex;
  align-items: center;
  white-space: nowrap;
}
.last {
  height: 75px;
  font-size: 83px;
  line-height: 99px;
  font-weight: 500;
  letter-spacing: -1.4px;
  color: #00a000;
}
.change {
  justify-content: space-between;
  font-size: 41px;
  color: #0b970b;
  position: relative;
  top: 13px;
  left: -1px;
}
.row label {
  font-size: 41px;
  color: #666;
  margin: -3px 0 0 -1px;
}
.row em {
  margin-left: auto;
  font-size: 41.500px;
}
.row em.down {
  color: #0b930b;
}
.row em.tiny {
  font-size: 29px;
}
.row em.mid {
  font-size: 38px;
}
.info {
  width: 32px;
  height: 32px;
  margin: -5px 0 0 2px;
  fill: none;
  stroke: #999;
  stroke-width: 2;
}
.info path {
  stroke-width: 3.400;
  stroke-linecap: round;
}
.row sup {
  font-size: 22px;
  line-height: 24px;
  color: #777;
  align-self: flex-start;
  margin: 7px 0 0 2px;
}
.row sup + .info {
  margin-left: 0;
}
.more {
  width: 124px;
  height: 56px;
  margin: -4px -1px 0 auto;
  border: 1.500px solid #dfe0e2;
  border-radius: 6px;
  font-size: 35px;
  line-height: 50px;
}

.notice {
  height: 105px;
  border-bottom: 2px solid #dcdcdc;
  display: flex;
  align-items: center;
  padding: 0 29px 0 34px;
}
.notice p {
  margin: -5px 0 0 31px;
  font-size: 39.200px;
  white-space: nowrap;
  width: 861px;
}
.notice .dot {
  width: 18px;
  height: 18px;
  border-radius: 50%;
  background: #f42222;
  margin-right: 29px;
  flex: none;
}

.periods {
  height: 104px;
  border-bottom: 2px solid #dcdcdc;
  display: flex;
  align-items: flex-start;
  padding-left: 34px;
  font-size: 43.500px;
  line-height: 64px;
  color: #666;
}
.periods span {
  margin-top: 22px;
  height: 76px;
  white-space: nowrap;
  display: flex;
  flex: none;
}
.periods .p0 {
  width: 161px;
}
.periods .p1 {
  width: 171px;
}
.periods .p2 {
  width: 156px;
}
.periods .p3 {
  width: 160px;
}
.periods .p4 {
  width: 151px;
}
.periods .p5 {
  width: 158px;
}
.periods .p5 svg {
  margin: 24px 0 0 9px;
}
.on {
  color: #e2570f;
  position: relative;
}
.periods .on::after,
.sections .on::after {
  content: '';
  position: absolute;
  width: 60px;
  height: 7px;
  border-radius: 4px;
  background: #e2570f;
  left: 13px;
  top: 66px;
}
.gear {
  margin-top: 24px;
}

.legend {
  height: 62px;
  padding: 0 0 4px 13px;
  display: flex;
  align-items: center;
  font-size: 35.700px;
  color: #c9292f;
  gap: 19px;
}
.legend .avg {
  color: #efbd4f;
  margin-right: -9px;
}
.chart text {
  font-family: Roboto, 'Noto Sans CJK SC', sans-serif;
}
.buy path {
  stroke: #ee8578;
}
.buy circle {
  fill: #ef4b3c;
  opacity: 0.85;
}
.buy rect {
  fill: #fb7d6c;
}
.sell path {
  stroke: #659cec;
}
.sell circle {
  fill: #4a93fb;
  opacity: 0.85;
}
.sell rect {
  fill: #659ffb;
}
.buy text,
.sell text {
  font: 700 32px 'Liberation Sans', sans-serif;
  fill: #fff;
}

.volbar {
  height: 62px;
  display: flex;
  align-items: center;
  padding: 0 0 3px 15px;
  font-size: 35.300px;
  white-space: nowrap;
}
.volbar button {
  width: 133px;
  height: 48px;
  display: flex;
  align-items: center;
  background: #f6f7f9;
  border: 1.500px solid #e2e4e7;
  border-radius: 7px;
  font-size: 29px;
  padding: 0 0 4px 10px;
}
.volbar button svg {
  margin: 3px 0 0 10px;
}
.v0 {
  width: 161px;
  margin-left: 3px;
}
.v1 {
  width: 290px;
  display: flex;
  align-items: center;
}
.v1 svg {
  margin-left: 12px;
}
.v2 em {
  color: #0b930b;
}
.volume {
  height: 226px;
}
.dates {
  height: 60px;
  margin: 0 12px;
  border-bottom: 2px solid #e2e2e2;
  display: flex;
  color: #999;
  font-size: 39px;
  line-height: 62px;
}
.dates span {
  width: 211.200px;
  padding-left: 24px;
  text-align: center;
}

.banner {
  margin: 18px 18px 0;
  height: 90px;
  border-radius: 45px;
  background: #fceee5;
  color: #dd5a14;
  display: flex;
  align-items: center;
  padding: 0 38px 0 30px;
}
.banner p {
  font-size: 39px;
  margin: -6px 0 0 53px;
}
.banner i {
  width: 1.500px;
  height: 36px;
  background: #d98155;
  margin: 0 17px 0 auto;
}

.sections {
  margin-top: 17px;
  height: 106px;
  border-top: 2px solid #dcdcdc;
  border-bottom: 2px solid #dcdcdc;
  display: flex;
  padding: 22px 0 0 57px;
  gap: 59.300px;
  font-size: 43.500px;
  line-height: 64px;
  color: #666;
}

.cards {
  height: 150px;
  padding: 11px 28px 0 36px;
  display: flex;
  gap: 18px;
}
.card {
  position: relative;
  width: 499px;
  height: 139px;
  border-radius: 22px 22px 0 0;
  background: #fff8f6;
  overflow: hidden;
  padding: 30px 0 0 24px;
}
.art {
  position: absolute;
  left: 0;
  top: 0;
}
.head {
  position: relative;
  height: 48px;
  display: flex;
  align-items: center;
}
.head h3 {
  font-size: 41.500px;
  font-weight: 500;
  margin: -4px 13px 0 13px;
}
.card p {
  position: relative;
  font-size: 35.700px;
  line-height: 50px;
  margin-top: 19px;
  color: #666;
}
.card p b {
  color: #d8481e;
  font-weight: 700;
  font-size: 37px;
}
.ratio {
  position: relative;
  margin: 24px 0 0 0;
}

.dock {
  height: 177px;
  border-top: 2px solid #d9dadc;
  background: #f7f8fa;
  display: flex;
  color: #666;
}
.index {
  width: 276px;
  padding: 9px 0 0 35px;
}
.index svg {
  margin-left: 92px;
}
.index strong {
  display: block;
  font-weight: 400;
  font-size: 44.500px;
  line-height: 52px;
  margin: 7px 0 0 21px;
  color: #0b970b;
}
.index div {
  display: flex;
  justify-content: space-between;
  font-size: 41px;
  line-height: 52px;
  margin-top: -2px;
}
.index em {
  color: #0b970b;
}
.item {
  width: 201px;
  display: flex;
  flex-direction: column;
  align-items: center;
  padding-top: 9px;
}
.item span {
  font-size: 39.500px;
  line-height: 56px;
  margin-top: 10px;
}
</style>
